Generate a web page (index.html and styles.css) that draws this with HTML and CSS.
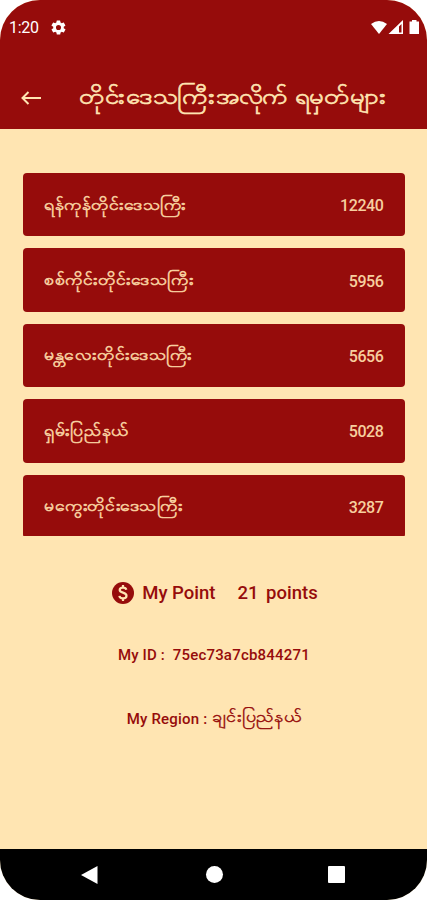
FILE: index.html
```html
<!DOCTYPE html>
<html lang="my">
<head>
<meta charset="utf-8">
<title>My Point</title>
<link rel="stylesheet" href="styles.css">
</head>
<body>
<div class="phone">
  <header class="header">
    <div class="status">
      <span class="time">1:20</span>
      <svg class="gear" width="17" height="17" viewBox="0 0 24 24"><path fill="#fff" fill-rule="evenodd" d="M19.4 13a7.500 7.500 0 0 0 0-2l2.100-1.600a.5.5 0 0 0 .1-.7l-2-3.400a.5.5 0 0 0-.6-.2l-2.500 1a7 7 0 0 0-1.700-1l-.4-2.700a.5.5 0 0 0-.5-.4h-4a.5.5 0 0 0-.5.4L9 5.100a7 7 0 0 0-1.700 1l-2.500-1a.5.5 0 0 0-.6.2l-2 3.400a.5.5 0 0 0 .1.700L4.600 11a7.500 7.500 0 0 0 0 2l-2.200 1.600a.5.5 0 0 0-.1.700l2 3.400c.1.200.4.300.6.200l2.500-1c.5.400 1.100.700 1.700 1l.4 2.700c0 .2.200.4.500.4h4c.3 0 .5-.2.500-.4l.4-2.700a7 7 0 0 0 1.700-1l2.500 1c.2.100.5 0 .6-.2l2-3.400a.5.5 0 0 0-.1-.7zM12 15.600a3.600 3.600 0 1 1 0-7.200 3.600 3.600 0 0 1 0 7.200z"/></svg>
      <svg class="signals" width="50" height="16" viewBox="0 0 50 16"><path fill="#fff" d="M0 4Q8 -2 16 4L8 14Z"/><path fill="#fff" fill-rule="evenodd" d="M32 0V14H17.500ZM30.500 4V12.500H28V6.500Z"/><path fill="#fff" d="M38.500 1.500H41V0H45.500V1.500H48V14H38.500Z"/></svg>
    </div>
    <div class="appbar">
      <svg class="back" width="20" height="14" viewBox="0 0 20 14"><path d="M20 7H1.500M7.500 1L1.500 7L7.500 13" fill="none" stroke="#ffe5b2" stroke-width="2"/></svg>
      <h1 class="title">တိုင်းဒေသကြီးအလိုက် ရမှတ်များ</h1>
    </div>
  </header>
  <main class="main">
    <div class="list">
      <div class="row"><span class="name">ရန်ကုန်တိုင်းဒေသကြီး</span><span class="score">12240</span></div>
      <div class="row"><span class="name">စစ်ကိုင်းတိုင်းဒေသကြီး</span><span class="score">5956</span></div>
      <div class="row"><span class="name">မန္တလေးတိုင်းဒေသကြီး</span><span class="score">5656</span></div>
      <div class="row"><span class="name">ရှမ်းပြည်နယ်</span><span class="score">5028</span></div>
      <div class="row"><span class="name">မကွေးတိုင်းဒေသကြီး</span><span class="score">3287</span></div>
    </div>
    <div class="points">
      <svg width="22" height="22" viewBox="0 0 22 22"><circle cx="11" cy="11" r="11" fill="#960c0b"/><path d="M14.300 7.800C14 6.200 12.700 5.600 11 5.600C9 5.600 7.700 6.500 7.700 8C7.700 11.500 14.500 9.800 14.500 13.700C14.500 15.400 13 16.400 11 16.400C9 16.400 7.600 15.500 7.400 13.900M11 3V6M11 16V19" fill="none" stroke="#ffe5b2" stroke-width="2.200"/></svg>
      <span class="label">My Point</span><span class="value">21 points</span>
    </div>
    <div class="id"><span>My ID :</span><span class="idvalue">75ec73a7cb844271</span></div>
    <div class="region"><span class="regionlabel">My Region :</span><span class="place">ချင်းပြည်နယ်</span></div>
  </main>
  <nav class="nav">
    <svg width="17" height="20" viewBox="0 0 17 20"><path fill="#fff" d="M16.500 1V19L0 10Z"/></svg>
    <span class="home"></span>
    <span class="recent"></span>
  </nav>
</div>
</body>
</html>
```
FILE: styles.css
```css
body { margin: 0; background: #fff; font-family: Roboto, "Noto Sans", sans-serif; }
.phone { height: 900px; border-radius: 40px; overflow: hidden; display: flex; flex-direction: column; background: #ffe5b2; }
.header { box-sizing: border-box; height: 128.500px; flex: none; background: #960c0b; color: #ffe5b2; }
.status { display: flex; align-items: center; height: 55px; padding: 0 6px 0 9px; color: #fff; }
.time { width: 41px; font-size: 16px; letter-spacing: -.3px; }
.signals { margin-left: auto; }
.appbar { display: flex; align-items: center; height: 59px; padding: 13px 0 0 21px; }
.back { flex: none; margin-right: 38px; }
.title { margin: 0; font-size: 21px; font-weight: 500; line-height: 36px; white-space: nowrap; transform: translateY(-1px) scaleX(1.23); transform-origin: left; -webkit-text-stroke: .6px; }
.main { flex: 1; display: flex; flex-direction: column; align-items: center; color: #960c0b; }
.list { width: 382px; height: 362.500px; margin-top: 44.500px; overflow: hidden; display: flex; flex-direction: column; gap: 12px; }
.row { box-sizing: border-box; flex: none; height: 63.400px; padding: 0 21px; display: flex; align-items: center; justify-content: space-between; border-radius: 4px; background: #960c0b; color: #f7cf9f; }
.name { font-size: 15px; line-height: 26px; white-space: nowrap; transform: scaleX(1.175); transform-origin: left; -webkit-text-stroke: .6px; }
.score { font-size: 16px; font-weight: 500; letter-spacing: -.4px; padding-top: 2px; }
.points { display: flex; align-items: center; height: 30px; margin-top: 42px; padding-left: 3px; font-size: 18.500px; font-weight: 500; }
.label { margin: 0 22px 0 8px; }
.value { word-spacing: 3px; }
.id { display: flex; align-items: center; gap: 8px; height: 24px; margin-top: 35px; padding-left: 1px; font-size: 15px; font-weight: 500; letter-spacing: .1px; }
.idvalue { letter-spacing: .2px; }
.region { display: flex; align-items: center; gap: 5px; height: 24px; margin-top: 40px; padding-right: 14px; font-size: 15px; font-weight: 500; }
.regionlabel { letter-spacing: .2px; }
.place { font-size: 15px; white-space: nowrap; transform: translateY(-1px) scaleX(1.2); transform-origin: left; -webkit-text-stroke: .4px; }
.nav { flex: none; box-sizing: border-box; height: 51px; background: #000; display: flex; align-items: center; padding-left: 81px; }
.home { width: 17px; height: 17px; border-radius: 50%; background: #fff; margin-left: 107.500px; }
.recent { width: 17px; height: 17px; border-radius: 1px; background: #fff; margin-left: 105.500px; }
```
